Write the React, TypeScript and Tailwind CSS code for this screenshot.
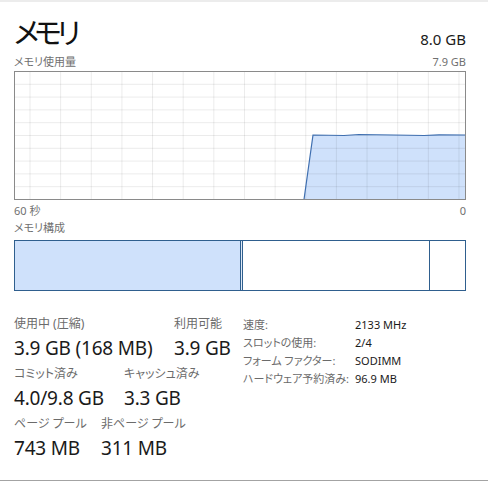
import React from "react";

const vLines = Array.from({ length: 15 }, (_, i) => 16 + i * 30.64);
const hLines = Array.from({ length: 9 }, (_, i) => (i + 1) * 12.8);

function UsageChart() {
  return (
    <svg width="452" height="129" viewBox="0 0 452 129" className="block">
      <polygon
        points="290,128.5 299,64 330,64.5 345,63.5 380,64 410,64.5 425,63.8 451.5,64 451.5,128.5"
        fill="#cfe1fb"
      />
      {vLines.map((x) => (
        <line key={"v" + x} x1={x} y1="0" x2={x} y2="129" stroke="rgba(0,0,0,0.08)" strokeWidth="1" />
      ))}
      {hLines.map((y) => (
        <line key={"h" + y} x1="0" y1={y + 0.5} x2="452" y2={y + 0.5} stroke="rgba(0,0,0,0.08)" strokeWidth="1" />
      ))}
      <polyline
        points="290,128.5 299,64 330,64.5 345,63.5 380,64 410,64.5 425,63.8 451.5,64"
        fill="none"
        stroke="#3f6fb0"
        strokeWidth="1.2"
      />
      <rect x="0.5" y="0.5" width="451" height="128" fill="none" stroke="#8a8a8a" strokeWidth="1" />
    </svg>
  );
}

function Stat({ label, value, width }: { label: string; value: string; width: string }) {
  return (
    <div className={"flex flex-col " + width}>
      <span className="text-[12px] leading-[16px] text-[#6b6b6b]">{label}</span>
      <span className="mt-[4px] text-[19px] leading-[24px] text-[#1a1a1a] tracking-[-0.2px]">{value}</span>
    </div>
  );
}

const details: [string, string][] = [
  ["速度:", "2133 MHz"],
  ["スロットの使用:", "2/4"],
  ["フォーム ファクター:", "SODIMM"],
  ["ハードウェア予約済み:", "96.9 MB"],
];

export default function App() {
  return (
    <div
      className="w-[488px] h-[481px] bg-white border-t-[2px] border-t-[#ececec] border-b border-b-[#a3a3a3] overflow-hidden [font-feature-settings:'palt']"
      style={{ fontFamily: '"Segoe UI", "Noto Sans", "Noto Sans CJK JP", sans-serif' }}
    >
      <div className="pl-[14px] pr-[22px] pt-[13px]">
        <div className="flex items-end justify-between">
          <h1 className="text-[29px] leading-[36px] font-normal text-[#111] tracking-[-5px]">メモリ</h1>
          <span className="text-[15px] leading-[20px] mb-[2px] text-[#1a1a1a]">8.0 GB</span>
        </div>
        <div className="flex justify-between text-[11px] leading-[14px] text-[#707070] mt-[4px]">
          <span>メモリ使用量</span>
          <span>7.9 GB</span>
        </div>
        <div className="mt-[2px]">
          <UsageChart />
        </div>
        <div className="flex justify-between text-[11px] leading-[14px] text-[#707070] mt-[4px]">
          <span>60 秒</span>
          <span>0</span>
        </div>
        <div className="text-[11px] leading-[14px] text-[#707070] mt-[3px]">メモリ構成</div>
        <div className="mt-[5px] flex h-[51px] w-[452px] border border-[#2f5f8e]">
          <div className="w-[225px] bg-[#cfe1fb]" />
          <div className="w-[3px] bg-[#dfe9f7] border-x border-[#2f5f8e]" />
          <div className="w-[187px] bg-white border-r border-[#2f5f8e]" />
          <div className="flex-1 bg-white" />
        </div>
        <div className="mt-[25px] flex">
          <div className="flex flex-col gap-[6px] w-[229px]">
            <div className="flex">
              <Stat label="使用中 (圧縮)" value="3.9 GB (168 MB)" width="w-[160px]" />
              <Stat label="利用可能" value="3.9 GB" width="" />
            </div>
            <div className="flex">
              <Stat label="コミット済み" value="4.0/9.8 GB" width="w-[110px]" />
              <Stat label="キャッシュ済み" value="3.3 GB" width="" />
            </div>
            <div className="flex">
              <Stat label="ページ プール" value="743 MB" width="w-[87px]" />
              <Stat label="非ページ プール" value="311 MB" width="" />
            </div>
          </div>
          <div className="flex flex-col text-[11px] leading-[18px]">
            {details.map(([k, v]) => (
              <div key={k} className="flex">
                <span className="w-[112px] text-[#6b6b6b]">{k}</span>
                <span className="text-[#1a1a1a]">{v}</span>
              </div>
            ))}
          </div>
        </div>
      </div>
    </div>
  );
}
